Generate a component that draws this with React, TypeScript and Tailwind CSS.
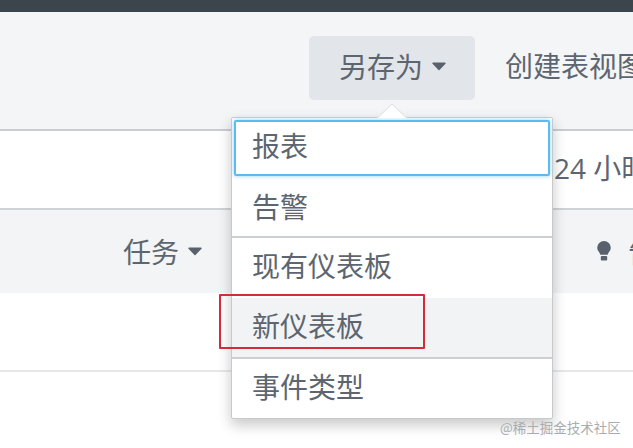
import { useState } from 'react';

const fontStack = '[font-family:"Noto_Sans_CJK_SC","Noto_Sans",sans-serif]';

function Caret() {
    return (
        <svg width="14" height="9" viewBox="0 0 14 9" className="shrink-0" aria-hidden="true">
            <path d="M1 0.500h12a0.700 0.700 0 0 1 0.500 1.200L7.500 8a0.700 0.700 0 0 1-1 0L0.500 1.700A0.700 0.700 0 0 1 1 0.500z" fill="#59626c" />
        </svg>
    );
}

function Bulb() {
    return (
        <svg width="14" height="20" viewBox="0 0 14 20" className="shrink-0" aria-hidden="true">
            <path d="M7 0a6.800 6.800 0 0 0-6.800 6.800c0 2.800 2.200 4.200 3.200 7h7.200c1-2.800 3.200-4.200 3.200-7A6.800 6.800 0 0 0 7 0z" fill="#59626c" />
            <rect x="3.800" y="15" width="6.400" height="4.600" rx="1" fill="#59626c" />
        </svg>
    );
}

export default function App() {
    const [selected] = useState('新仪表板');

    const menuGroups = [['报表', '告警'], ['现有仪表板', '新仪表板'], ['事件类型']];

    return (
        <div className={`relative w-[633px] h-[448px] overflow-hidden bg-white text-[28px] leading-none text-[#5d6670] ${fontStack}`}>
            {/* Top bar */}
            <div className="h-3 bg-[#3c444c]" />

            {/* Toolbar */}
            <div className="h-[119px] pt-6 pl-[309px] bg-[#f3f5f7] border-b-2 border-[#c9cdd1] flex items-start gap-[30px] whitespace-nowrap">
                <div className="w-[166px] h-16 shrink-0 rounded-[5px] bg-[#e2e5e9] flex items-center pl-[30px] pb-1 gap-[9px]">
                    <span>另存为</span>
                    <Caret />
                </div>
                <span className="mt-[15px] shrink-0">创建表视图</span>
            </div>

            {/* Time range row */}
            <div className="h-[77px] pl-[554px] flex items-center whitespace-nowrap">
                <span className="[font-family:'Open_Sans','Noto_Sans_CJK_SC',sans-serif] -mt-1">24 小时</span>
            </div>

            {/* Table header */}
            <div className="h-[85px] bg-[#f2f4f6] border-t-2 border-[#d0d3d6] flex items-center whitespace-nowrap pl-[123px] pb-px">
                <span>任务</span>
                <span className="ml-[9px]"><Caret /></span>
                <span className="ml-[395px]"><Bulb /></span>
                <span className="ml-[17px]">告警</span>
            </div>

            {/* Table row */}
            <div className="h-[79px] border-b-2 border-[#e6e8ea]" />

            {/* Dropdown */}
            <div className="absolute left-[231px] top-[117px] w-[322px] h-[302px] bg-white border border-[#c6cacd] rounded-[2px] shadow-[0_6px_14px_rgba(0,0,0,0.22)]">
                <svg width="30" height="15" viewBox="0 0 30 15" className="absolute left-[145px] top-[-15px]" aria-hidden="true">
                    <path d="M0 15L15 0l15 15z" fill="#ffffff" />
                    <path d="M0.500 15L15 0.700 29.500 15" fill="none" stroke="#d3d6d9" />
                </svg>
                {menuGroups.map((group, groupIndex) => (
                    <div key={group[0]} className={groupIndex > 0 ? 'border-t-2 border-[#cdd0d3]' : ''}>
                        {group.map((item, itemIndex) => (
                            <div
                                key={item}
                                className={
                                    itemIndex === 0 && groupIndex === 0
                                        ? 'h-14 mx-[2px] mt-[2px] pl-4 pb-[6px] flex items-center bg-white border-2 border-[#5cbcf2] rounded-[2px] shadow-[0_0_4px_#8fd3f7]'
                                        : item === selected
                                          ? 'h-[59px] pl-5 pb-[6px] flex items-center bg-[#f1f3f5]'
                                          : item === '告警'
                                            ? 'h-[60px] pl-5 flex items-center'
                                            : 'h-[60px] pl-5 pb-[6px] flex items-center'
                                }
                            >
                                {item}
                            </div>
                        ))}
                    </div>
                ))}
            </div>

            {/* Annotation */}
            <div className="absolute left-[219px] top-[294px] w-[206px] h-[55px] border-2 border-[#d42a3a] rounded-[1px]" />

            {/* Watermark */}
            <div className="absolute left-[500px] top-[419px] text-[13.500px] leading-4 text-[#a9adb0] whitespace-nowrap">@稀土掘金技术社区</div>
        </div>
    );
}
